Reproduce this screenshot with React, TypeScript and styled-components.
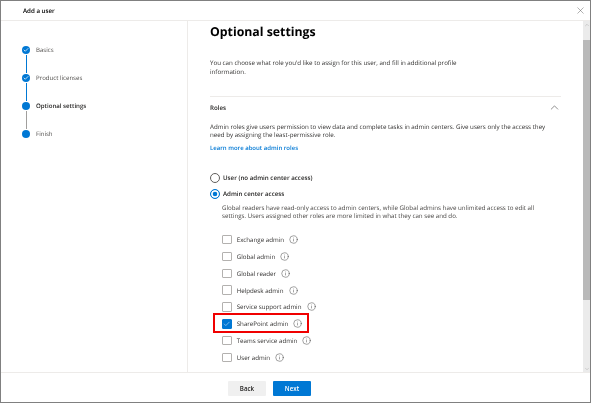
import styled, { createGlobalStyle } from 'styled-components';
import { Check, ChevronDown, ChevronUp, Info, X } from 'lucide-react';

const steps = [
  { label: 'Basics', done: true },
  { label: 'Product licenses', done: true },
  { label: 'Optional settings', current: true },
  { label: 'Finish' },
];

const roles = [
  'Exchange admin',
  'Global admin',
  'Global reader',
  'Helpdesk admin',
  'Service support admin',
  'SharePoint admin',
  'Teams service admin',
  'User admin',
];

const App = () => {
  return (
    <>
      <GlobalStyle />
      <Window>
        <Header>
          <Title>Add a user</Title>
          <CloseIcon size={11} strokeWidth={1} />
        </Header>
        <Body>
          <Sidebar>
            {steps.map((step, i) => (
              <Step key={step.label}>
                <Rail>
                  <Dot>{step.done && <Check size={6} strokeWidth={3} color="#fff" />}</Dot>
                  {i < steps.length - 1 && <Line $active={!!step.done} />}
                </Rail>
                <StepLabel $current={!!step.current}>{step.label}</StepLabel>
              </Step>
            ))}
          </Sidebar>
          <Main>
            <Heading>Optional settings</Heading>
            <Intro>
              You can choose what role you'd like to assign for this user, and fill in additional profile information.
            </Intro>
            <Section>
              <SectionHead>
                <SectionTitle>Roles</SectionTitle>
                <ChevronUp size={13} strokeWidth={1} color="#333" />
              </SectionHead>
              <Description>
                Admin roles give users permission to view data and complete tasks in admin centers. Give users only the
                access they need by assigning the least-permissive role.
              </Description>
              <LearnMore href="#">Learn more about admin roles</LearnMore>
              <Radios>
                <RadioRow>
                  <Radio />
                  <RadioLabel>User (no admin center access)</RadioLabel>
                </RadioRow>
                <RadioRow>
                  <Radio $checked />
                  <RadioLabel>Admin center access</RadioLabel>
                </RadioRow>
              </Radios>
              <RoleNote>
                Global readers have read-only access to admin centers, while Global admins have unlimited access to edit
                all settings. Users assigned other roles are more limited in what they can see and do.
              </RoleNote>
              <RoleList>
                {roles.map((role) => {
                  const checked = role === 'SharePoint admin';
                  return (
                    <RoleRow key={role} $highlight={checked}>
                      <CheckBox $checked={checked}>{checked && <Check size={8} strokeWidth={1.5} color="#fff" />}</CheckBox>
                      <RoleLabel>{role}</RoleLabel>
                      <Info size={9} strokeWidth={1.2} color="#333" />
                    </RoleRow>
                  );
                })}
              </RoleList>
            </Section>
          </Main>
          <Scrollbar>
            <ScrollArrow>
              <ChevronUp size={6} strokeWidth={1.5} color="#999" />
            </ScrollArrow>
            <ScrollTrack>
              <ScrollThumb />
            </ScrollTrack>
            <ScrollArrow>
              <ChevronDown size={6} strokeWidth={1.5} color="#999" />
            </ScrollArrow>
          </Scrollbar>
        </Body>
        <Footer>
          <BackButton>Back</BackButton>
          <NextButton>Next</NextButton>
        </Footer>
      </Window>
    </>
  );
};

const GlobalStyle = createGlobalStyle`
  html, body {
    margin: 0;
    padding: 0;
    background: #fff;
  }
  * {
    box-sizing: border-box;
  }
`;

const Window = styled.div`
  display: flex;
  flex-direction: column;
  width: 591px;
  height: 403px;
  overflow: hidden;
  border: 1px solid #808080;
  background: #fff;
  font-family: 'Open Sans', 'Liberation Sans', sans-serif;
  text-rendering: geometricPrecision;
  color: #323130;
  filter: blur(0.3px);
`;

const Header = styled.header`
  display: flex;
  flex: none;
  align-items: center;
  justify-content: space-between;
  height: 20px;
  padding: 0 4px 0 22px;
  border-bottom: 1px solid #edebe9;
`;

const Title = styled.div`
  font-size: 6.2px;
  font-weight: 600;
  color: #000;
`;

const CloseIcon = styled(X)`
  color: #555;
`;

const Body = styled.div`
  display: flex;
  flex: 1;
  min-height: 0;
`;

const Sidebar = styled.nav`
  flex: none;
  width: 187px;
  padding-top: 24.5px;
  padding-left: 21px;
  border-right: 1px solid #edebe9;
`;

const Step = styled.div`
  display: flex;
  gap: 6px;
  height: 28px;
`;

const Rail = styled.div`
  display: flex;
  flex-direction: column;
  align-items: center;
  width: 8px;
`;

const Dot = styled.div`
  display: flex;
  flex: none;
  align-items: center;
  justify-content: center;
  width: 8px;
  height: 8px;
  border-radius: 50%;
  background: #0078d4;
`;

const Line = styled.div<{ $active: boolean }>`
  flex: 1;
  width: 1px;
  margin: 1px 0;
  background: ${(p) => (p.$active ? '#0078d4' : '#a19f9d')};
`;

const StepLabel = styled.div<{ $current: boolean }>`
  font-size: 6.1px;
  line-height: 8px;
  font-weight: ${(p) => (p.$current ? 600 : 400)};
  color: ${(p) => (p.$current ? '#201f1e' : '#4f4d4b')};
`;

const Main = styled.main`
  flex: 1;
  min-width: 0;
  padding: 2px 0 0 22px;
  overflow: hidden;
`;

const Heading = styled.h1`
  margin: 0;
  font-size: 12.3px;
  line-height: 18px;
  font-weight: 700;
  color: #000;
`;

const Intro = styled.p`
  width: 262px;
  margin: 17px 0 0;
  font-size: 6.2px;
  line-height: 9px;
  color: #323130;
`;

const Section = styled.section`
  width: 351px;
  margin-top: 20px;
  padding-top: 5px;
  border-top: 1px solid #edebe9;
`;

const SectionHead = styled.div`
  display: flex;
  align-items: center;
  justify-content: space-between;
  height: 10px;
`;

const SectionTitle = styled.div`
  font-size: 6.2px;
  font-weight: 600;
  color: #201f1e;
`;

const Description = styled.p`
  margin: 10.6px 0 0;
  font-size: 6.2px;
  line-height: 8.8px;
  color: #323130;
`;

const LearnMore = styled.a`
  display: block;
  margin-top: 4.3px;
  font-size: 6px;
  font-weight: 600;
  line-height: 9px;
  color: #0078d4;
  text-decoration: none;
`;

const Radios = styled.div`
  display: flex;
  flex-direction: column;
  gap: 6px;
  margin-top: 19.5px;
`;

const RadioRow = styled.div`
  display: flex;
  align-items: center;
  gap: 3px;
  height: 10px;
`;

const Radio = styled.span<{ $checked?: boolean }>`
  flex: none;
  width: 10px;
  height: 10px;
  border-radius: 50%;
  border: 1px solid ${(p) => (p.$checked ? '#0078d4' : '#605e5c')};
  background: ${(p) => (p.$checked ? '#0078d4' : '#fff')};
  box-shadow: ${(p) => (p.$checked ? 'inset 0 0 0 1.7px #fff' : 'none')};
`;

const RadioLabel = styled.span`
  font-size: 6.2px;
  font-weight: 600;
  color: #201f1e;
`;

const RoleNote = styled.p`
  width: 320px;
  margin: 4.6px 0 0 12px;
  font-size: 6.2px;
  line-height: 8.8px;
  color: #484644;
`;

const RoleList = styled.div`
  display: flex;
  flex-direction: column;
  gap: 7.35px;
  margin: 13.65px 0 0 12px;
`;

const RoleRow = styled.div<{ $highlight: boolean }>`
  position: relative;
  display: flex;
  align-items: center;
  gap: 5.2px;
  height: 9.5px;

  ${(p) =>
    p.$highlight &&
    `
    &::before {
      content: '';
      position: absolute;
      box-sizing: border-box;
      left: -9px;
      top: -6px;
      width: 96px;
      height: 20px;
      border: 2px solid #f00000;
    }
  `}
`;

const CheckBox = styled.span<{ $checked: boolean }>`
  display: flex;
  flex: none;
  align-items: center;
  justify-content: center;
  width: 9.5px;
  height: 9.5px;
  border: 1px solid ${(p) => (p.$checked ? '#0078d4' : '#b3b1af')};
  border-radius: 1px;
  background: ${(p) => (p.$checked ? '#0078d4' : '#fff')};
`;

const RoleLabel = styled.span`
  font-size: 6.2px;
  color: #323130;
`;

const Scrollbar = styled.div`
  display: flex;
  flex: none;
  flex-direction: column;
  width: 7px;
  background: #ebebeb;
`;

const ScrollArrow = styled.div`
  display: flex;
  flex: none;
  align-items: center;
  justify-content: center;
  height: 7px;
`;

const ScrollTrack = styled.div`
  flex: 1;
  padding-top: 12px;
`;

const ScrollThumb = styled.div`
  height: 260px;
  background: #b9b9b9;
`;

const Footer = styled.footer`
  display: flex;
  flex: none;
  align-items: center;
  gap: 7px;
  height: 30px;
  padding: 1px 0 0 227px;
  border-top: 1px solid #edebe9;
`;

const BackButton = styled.button`
  width: 38px;
  height: 15px;
  padding: 0;
  border: none;
  border-radius: 1px;
  background: #f0f0f0;
  font-family: inherit;
  font-size: 6.2px;
  font-weight: 600;
  color: #201f1e;
`;

const NextButton = styled(BackButton)`
  background: #0078d4;
  color: #fff;
`;

export default App;
